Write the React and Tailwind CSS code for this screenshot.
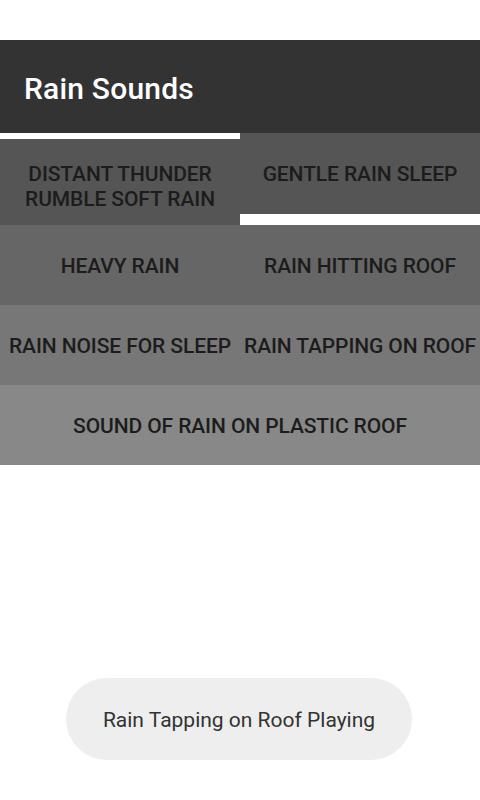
import React from "react";

const Cell = ({ label, className = "" }) => (
  <div className={`flex items-center justify-center text-center ${className}`}>
    <span className="text-[21px] leading-[25px] font-medium uppercase whitespace-nowrap tracking-[-0.1px] text-[#1c1c1c]">
      {label}
    </span>
  </div>
);

const App = () => {
  return (
    <div
      className="relative w-[480px] h-[800px] bg-white overflow-hidden"
      style={{ fontFamily: "Roboto, 'Liberation Sans', sans-serif" }}
    >
      <div className="h-[40px]" />
      <div className="h-[93px] bg-[#333333] flex items-center px-6 pt-1">
        <h1 className="text-[30px] font-medium text-white tracking-[0.2px]">Rain Sounds</h1>
      </div>

      {/* first row: left has bar on top, right has bar at bottom */}
      <div className="grid grid-cols-2 h-[92px] bg-[#555555]">
        <div className="flex flex-col">
          <div className="h-[6px] bg-white" />
          <Cell label={<>Distant Thunder<br />Rumble Soft Rain</>} className="flex-1 pt-[10px]" />
        </div>
        <div className="flex flex-col">
          <Cell label="Gentle Rain Sleep" className="flex-1 pt-[2px]" />
          <div className="h-[11px] bg-white" />
        </div>
      </div>

      <div className="grid grid-cols-2 h-[80px] bg-[#666666]">
        <Cell label="Heavy Rain" className="pt-[2px]" />
        <Cell label="Rain Hitting Roof" className="pt-[2px]" />
      </div>
      <div className="grid grid-cols-2 h-[80px] bg-[#777777]">
        <Cell label="Rain Noise for Sleep" className="pt-[2px]" />
        <Cell label="Rain Tapping on Roof" className="pt-[2px]" />
      </div>
      <div className="h-[80px] bg-[#888888]">
        <Cell label="Sound of Rain on Plastic Roof" className="h-full pt-[2px]" />
      </div>

      <div className="absolute left-[66px] top-[678px] w-[346px] h-[82px] rounded-full bg-[#eeeeee] flex items-center justify-center pt-1">
        <span className="text-[21px] text-[#333333]">Rain Tapping on Roof Playing</span>
      </div>
    </div>
  );
};

export default App;
